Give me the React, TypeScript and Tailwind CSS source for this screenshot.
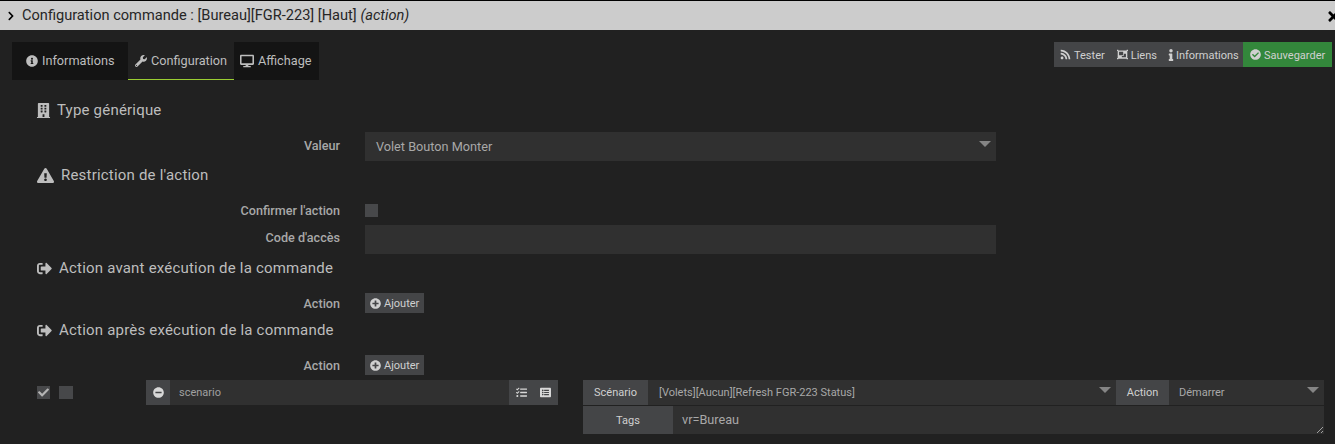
import {
  FaBuilding,
  FaCheck,
  FaCheckCircle,
  FaChevronRight,
  FaDesktop,
  FaExclamationTriangle,
  FaInfo,
  FaInfoCircle,
  FaListAlt,
  FaMinusCircle,
  FaObjectGroup,
  FaPlusCircle,
  FaRss,
  FaSignOutAlt,
  FaTasks,
  FaTimes,
  FaWrench,
} from "react-icons/fa";
import type { ReactNode } from "react";

function Titre({ icon, children, className }: { icon: ReactNode; children: ReactNode; className: string }) {
  return (
    <div className={`flex items-center gap-[7px] h-[26px] text-[15px] tracking-[0.2px] text-[#bdbdbd] ${className}`}>
      {icon}
      <span>{children}</span>
    </div>
  );
}

function Ligne({
  label,
  children,
  className,
  labelClass = "",
}: {
  label: string;
  children: ReactNode;
  className: string;
  labelClass?: string;
}) {
  return (
    <div className={`flex items-center ${className}`}>
      <label className={`w-[303px] shrink-0 text-right text-[12.6px] font-medium text-[#a8a8a8] ${labelClass}`}>
        {label}
      </label>
      <div className="ml-[25px] flex-1">{children}</div>
    </div>
  );
}

function BoutonAjouter() {
  return (
    <button className="flex items-center gap-[3px] h-5 w-[59px] pl-[5px] bg-[#444547] text-[11px] text-[#d0d0d0]">
      <FaPlusCircle className="text-[11px]" />
      <span className="translate-y-px">Ajouter</span>
    </button>
  );
}

function Fleche() {
  return <div className="w-0 h-0 border-x-[6px] border-x-transparent border-t-[6px] border-t-[#858585]" />;
}

export default function App() {
  return (
    <div className="w-[1335px] h-[444px] overflow-hidden bg-[#212121] font-['Roboto',sans-serif]">
      <div className="h-px bg-black" />
      <div className="h-[29px] bg-[#cccccc] flex items-center pl-[6px] text-[14.6px] text-[#262626]">
        <FaChevronRight className="text-[10px] text-black mr-1.5" />
        <span>
          Configuration commande : [Bureau][FGR-223] [Haut] <em>(action)</em>
        </span>
        <FaTimes className="ml-auto mr-[-6px] translate-y-px text-[15px] text-black" />
      </div>

      <div className="flex justify-between items-start pl-3 pr-[3px] pt-3">
        <div className="flex h-[38px] text-[12.7px] text-[#bdbdbd]">
          <div className="flex items-center gap-1 w-[116px] pl-[14px] bg-[#141414]">
            <FaInfoCircle className="text-[12px]" />
            Informations
          </div>
          <div className="flex items-center gap-1 w-[106px] pl-[7px] border-b border-[#9acd32]">
            <FaWrench className="text-[12px]" />
            Configuration
          </div>
          <div className="flex items-center gap-1 w-[85px] pl-1.5 bg-[#141414]">
            <FaDesktop className="text-[14px]" />
            Affichage
          </div>
        </div>
        <div className="flex h-[25px] text-[11px] text-[#d0d0d0]">
          <div className="flex items-center w-[189px] pl-1.5 bg-[#444547]">
            <FaRss className="text-[11px]" />
            <span className="ml-[3px] translate-y-[2px]">Tester</span>
            <FaObjectGroup className="ml-3 text-[11px]" />
            <span className="ml-[3px] translate-y-[2px]">Liens</span>
            <FaInfo className="ml-2 text-[12px]" />
            <span className="-ml-px translate-y-[2px]">Informations</span>
          </div>
          <div className="flex items-center gap-[3px] w-[89px] pl-[7px] bg-[#33873b]">
            <FaCheckCircle className="text-[11px]" />
            <span className="translate-y-[2px]">Sauvegarder</span>
          </div>
        </div>
      </div>

      <div className="pl-[37px] pr-[11px]">
        <Titre icon={<FaBuilding className="-ml-px mr-[-1px] text-[15px]" />} className="mt-[17px]">
          Type générique
        </Titre>
        <Ligne label="Valeur" className="mt-[9px] pr-[328px]">
          <div className="flex items-start justify-between h-[29px] pl-[11px] pr-[5px] bg-[#303030] text-[12.7px] text-[#a8a8a8]">
            <span className="leading-[29px]">Volet Bouton Monter</span>
            <div className="mt-[9px]">
              <Fleche />
            </div>
          </div>
        </Ligne>
        <Titre icon={<FaExclamationTriangle className="text-[17px]" />} className="mt-px">
          Restriction de l'action
        </Titre>
        <Ligne label="Confirmer l'action" className="mt-4 h-[13px]" labelClass="translate-y-px">
          <div className="w-[13px] h-[13px] bg-[#47484a]" />
        </Ligne>
        <Ligne label="Code d'accès" className="mt-2 pr-[328px]" labelClass="-translate-y-px">
          <div className="h-[29px] bg-[#303030]" />
        </Ligne>
        <Titre icon={<FaSignOutAlt className="text-[15px]" />} className="mt-px">
          Action avant exécution de la commande
        </Titre>
        <Ligne label="Action" className="mt-[12px]" labelClass="translate-y-px">
          <BoutonAjouter />
        </Ligne>
        <Titre icon={<FaSignOutAlt className="text-[15px]" />} className="mt-[4px]">
          Action après exécution de la commande
        </Titre>
        <Ligne label="Action" className="mt-[12px]" labelClass="translate-y-px">
          <BoutonAjouter />
        </Ligne>

        <div className="flex items-start mt-[5px]">
          <div className="flex items-center gap-[9px] w-[109px] h-[25px] shrink-0">
            <div className="flex items-center justify-center w-[13px] h-[13px] bg-[#47484a] text-[#b4b4b4]">
              <FaCheck className="text-[11px]" />
            </div>
            <div className="w-[14px] h-[13px] bg-[#47484a]" />
          </div>
          <div className="flex h-[25px] w-[412px] shrink-0 text-[11px] text-[#a0a0a0]">
            <div className="flex items-center justify-center w-6 bg-[#444547] text-[#d8d8d8]">
              <FaMinusCircle className="text-[11px]" />
            </div>
            <div className="flex-1 flex items-center pl-[9px] bg-[#303030]">
              <span className="translate-y-px">scenario</span>
            </div>
            <div className="flex items-center gap-[13px] w-[49px] pl-[7px] bg-[#444547] text-[#d8d8d8]">
              <FaTasks className="text-[11px]" />
              <FaListAlt className="text-[11px]" />
            </div>
          </div>
          <div className="ml-[25px] flex-1 flex flex-col gap-px text-[11px] text-[#a8a8a8]">
            <div className="flex h-[25px]">
              <div className="flex items-center justify-center w-[65px] bg-[#444547] text-[#d0d0d0]">
                <span className="translate-y-px">Scénario</span>
              </div>
              <div className="flex-1 flex items-start justify-between pl-[11px] pr-[5px] bg-[#303030]">
                <span className="leading-[25px]">[Volets][Aucun][Refresh FGR-223 Status]</span>
                <div className="mt-[7px]">
                  <Fleche />
                </div>
              </div>
              <div className="flex items-center justify-center w-[53px] bg-[#444547] text-[#d0d0d0]">
                <span className="translate-y-px">Action</span>
              </div>
              <div className="flex items-start justify-between w-[155px] pl-2.5 pr-[5px] bg-[#303030]">
                <span className="leading-[25px]">Démarrer</span>
                <div className="mt-[7px]">
                  <Fleche />
                </div>
              </div>
            </div>
            <div className="flex h-[28px]">
              <div className="flex items-center justify-center w-[90px] bg-[#444547] text-[#d0d0d0]">
                <span className="translate-y-px">Tags</span>
              </div>
              <div className="flex-1 flex items-center pl-[9px] bg-[#303030] text-[12.7px] relative">
                vr=Bureau
                <svg className="absolute right-0 bottom-0 w-[8px] h-[8px]" viewBox="0 0 8 8">
                  <path d="M1 7 7 1M5 7 7 5" stroke="#a0a0a0" strokeWidth="1" />
                </svg>
              </div>
            </div>
          </div>
        </div>
      </div>
    </div>
  );
}
